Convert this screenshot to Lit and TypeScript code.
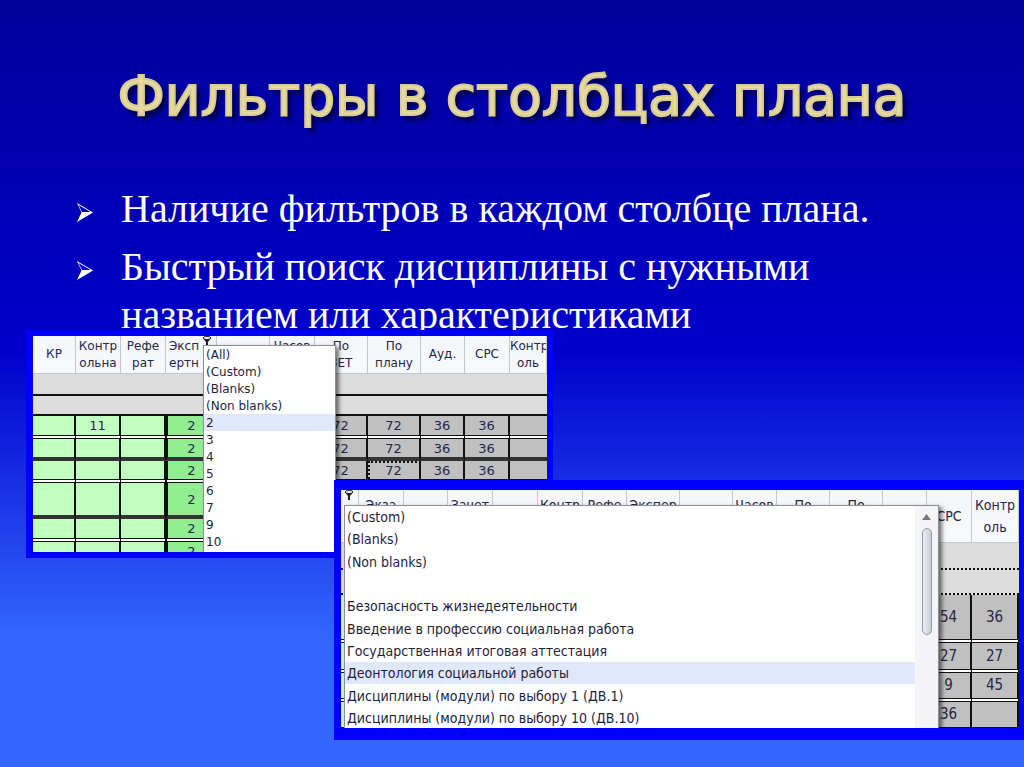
import { LitElement, html, css, nothing } from "lit";
import { customElement, property } from "lit/decorators.js";

type Column = { label: string; width?: number; filter?: boolean; top?: boolean };
type Row = { cells: string[]; height: number; dark?: boolean };

const funnel = html`<svg class="funnel" viewBox="0 0 10 10" aria-hidden="true">
  <ellipse cx="5" cy="2" rx="4" ry="1.5" fill="#fff" stroke="#222" />
  <path d="M1.5 3 L4 6 V10 H6 V6 L8.500 3 Z" fill="#222" />
</svg>`;

@customElement("plan-grid")
class PlanGrid extends LitElement {
  @property({ attribute: false }) columns: Column[] = [];
  @property({ attribute: false }) rows: Row[] = [];
  @property({ attribute: false }) greens: string[] = [];
  @property({ type: Number }) head = 38;
  @property({ type: Number }) band = 20;
  @property({ type: Boolean, reflect: true }) dotted = false;
  @property({ attribute: false }) focusCell = "";

  static styles = css`
    :host { display: block; }
    .grid {
      width: 100%;
      table-layout: fixed;
      border-collapse: separate;
      border-spacing: 0;
      color: #26264a;
      background: #fff;
      text-align: center;
    }
    .title {
      padding: 0;
      font-weight: 400;
      line-height: var(--head-line);
      white-space: pre;
      overflow: hidden;
      background: linear-gradient(#f4f6f9, #f8f9fb);
      border-right: 1px solid #c3c7ce;
      border-bottom: 1px solid #c3c7ce;
      box-sizing: border-box;
      position: relative;
    }
    .top { vertical-align: top; padding-top: var(--head-pad); }
    .filtered { padding-right: 14px; }
    .funnel { position: absolute; right: 4px; top: 0; width: 10px; height: 10px; }
    .band { padding: 0; background: #dcdcdc; border-bottom: 2px solid #111; box-sizing: border-box; }
    :host([dotted]) .band { border-bottom-style: dotted; }
    .cell {
      padding: 0;
      box-sizing: border-box;
      background: #c0c0c0;
      border-right: 2px solid #111;
      border-bottom: 4px double #111;
      background-clip: padding-box;
      line-height: 1;
      font-size: var(--cell-size);
    }
    :host(:not([dotted])) .cell:last-child { border-right: 0; }
    .dark .cell { border-bottom: 4px solid #333; }
    .light { background-color: #c0ffc0; }
    .strong { background-color: #90ee90; border-left: 2px solid #111; }
    .focus { outline: 2px dotted #111; outline-offset: -2px; }
  `;

  render() {
    const span = this.columns.length;
    return html`<table class="grid">
      <colgroup>
        ${this.columns.map((c) => html`<col style=${c.width ? `width:${c.width}px` : nothing} />`)}
      </colgroup>
      <thead>
        <tr style="height:${this.head}px">
          ${this.columns.map(
            (c) => html`<th scope="col" class="title ${c.filter ? "filtered" : ""} ${c.top ? "top" : ""}">${c.label}${c.filter ? funnel : nothing}</th>`
          )}
        </tr>
      </thead>
      <tbody>
        <tr style="height:${this.band + 2}px"><td class="band" colspan=${span}></td></tr>
        <tr style="height:${this.band}px"><td class="band" colspan=${span}></td></tr>
        ${this.rows.map(
          (r, y) => html`<tr class=${r.dark ? "dark" : ""} style="height:${r.height}px">
            ${r.cells.map(
              (v, x) => html`<td class="cell ${this.greens[x] ?? ""} ${this.focusCell === `${y}-${x}` ? "focus" : ""}">${v}</td>`
            )}
          </tr>`
        )}
      </tbody>
    </table>`;
  }
}

const planColumns: Column[] = [
  { label: "КР", width: 43 },
  { label: "Контр\nольна", width: 45 },
  { label: "Рефе\nрат", width: 45 },
  { label: "Эксп\nертн", width: 51, filter: true },
  { label: "", width: 53 },
  { label: "Часов", width: 45, top: true },
  { label: "По\nЗЕТ", width: 53 },
  { label: "По\nплану", width: 53 },
  { label: "Ауд.", width: 44 },
  { label: "СРС", width: 45 },
  { label: "Контр\nоль" },
];
const planValues = ["", "", "", "2", "", "", "72", "72", "36", "36", ""];
const planRows: Row[] = [
  { cells: planValues.map((v, i) => (i === 1 ? "11" : v)), height: 23 },
  { cells: planValues, height: 22, dark: true },
  { cells: planValues, height: 22 },
  { cells: planValues, height: 36, dark: true },
  { cells: planValues, height: 23 },
  { cells: planValues, height: 22 },
];

const nameColumns: Column[] = [
  { label: "", width: 18, filter: true },
  { label: "Экза", width: 45, top: true },
  { label: "", width: 44 },
  { label: "Зачет", width: 45, top: true },
  { label: "", width: 45 },
  { label: "Контр", width: 45, top: true },
  { label: "Рефе", width: 44, top: true },
  { label: "Экспер", width: 53, top: true },
  { label: "", width: 53 },
  { label: "Часов", width: 44, top: true },
  { label: "По", width: 53, top: true },
  { label: "По", width: 53, top: true },
  { label: "", width: 44 },
  { label: "СРС", width: 45 },
  { label: "Контр\nоль" },
];
const nameRow = (a: string, b: string) => [...Array(13).fill(""), a, b];
const nameRows: Row[] = [
  { cells: nameRow("54", "36"), height: 48 },
  { cells: nameRow("27", "27"), height: 30 },
  { cells: nameRow("9", "45"), height: 29 },
  { cells: nameRow("36", ""), height: 29 },
];

const numbers = ["(All)", "(Custom)", "(Blanks)", "(Non blanks)", "2", "3", "4", "5", "6", "7", "9", "10"];
const names = [
  "(Custom)",
  "(Blanks)",
  "(Non blanks)",
  "\u00a0",
  "Безопасность жизнедеятельности",
  "Введение в профессию социальная работа",
  "Государственная итоговая аттестация",
  "Деонтология социальной работы",
  "Дисциплины (модули) по выбору 1 (ДВ.1)",
  "Дисциплины (модули) по выбору 10 (ДВ.10)",
];

@customElement("app-root")
class AppRoot extends LitElement {
  static styles = css`
    :host { display: block; }
    .slide {
      position: relative;
      min-height: 100vh;
      box-sizing: border-box;
      overflow: hidden;
      padding: 60px 76px 0;
      background: linear-gradient(#000099, #0000cc 46%, #3366ff 83%);
    }
    .heading {
      display: flex;
      justify-content: center;
      margin: 0;
      font: 400 55px/72px "DejaVu Sans", Verdana, sans-serif;
      white-space: nowrap;
      color: #e6da9e;
      -webkit-text-stroke: 2px #d8cb94;
      text-shadow: 4px 5px 4px #00003c;
    }
    .points {
      display: flex;
      flex-direction: column;
      gap: 10px;
      margin: 53px 0 0;
      padding: 0;
      list-style: none;
      color: #fff;
      font: 40px/48px "Liberation Serif", "Times New Roman", serif;
    }
    .point { display: flex; gap: 28px; }
    .arrow { flex: none; width: 17px; height: 19px; margin-top: 18px; }
    .shot { position: absolute; border: 7px solid #0000ff; box-sizing: border-box; overflow: hidden; }
    .first {
      left: 26px;
      right: 471px;
      top: 330px;
      height: 228px;
      border-width: 6px 6px 6px 7px;
      --head-line: 17px;
      --head-pad: 2px;
      --cell-size: 13px;
      font: 12px "DejaVu Sans", Verdana, sans-serif;
    }
    .second {
      left: 334px;
      right: 0;
      top: 480px;
      height: 260px;
      border-width: 10px 5px 12px 7px;
      --head-line: 22px;
      --head-pad: 4px;
      --cell-size: 15px;
      font: 14px "DejaVu Sans Condensed", Tahoma, sans-serif;
    }
    .menu { position: absolute; box-sizing: border-box; display: flex; background: #fff; border: 1px solid #8b8f96; border-bottom: 0; box-shadow: 3px 2px 4px #0008; }
    .numbers { left: 170px; top: 9px; bottom: 0; width: 133px; }
    .names { left: 3px; top: 15px; bottom: 0; right: 80px; }
    .list {
      flex: 1;
      min-width: 0;
      height: 100%;
      margin: 0;
      padding: 0;
      border: 0;
      outline: 0;
      appearance: none;
      overflow: hidden;
      background: #fff;
      color: #1e1e3c;
      font: inherit;
    }
    .option { display: flex; align-items: center; box-sizing: border-box; padding: 0 2px; color: #1e1e3c; }
    .option:checked { background: linear-gradient(#e0e8fb, #e0e8fb); color: #1e1e3c; }
    .numbers .option { height: 17px; min-height: 17px; }
    .names .option { height: 22px; min-height: 22px; }
    .names .option:nth-child(3n) { height: 23px; }
    .scroll { display: flex; flex-direction: column; align-items: center; gap: 8px; width: 23px; padding-top: 8px; box-sizing: border-box; background: #f4f4f7; }
    .up { width: 9px; height: 6px; }
    .thumb { width: 10px; height: 107px; box-sizing: border-box; border: 1px solid #9598a2; border-radius: 5px; background: linear-gradient(90deg, #eceef2, #c9ccd4); }
  `;

  private point(text: string) {
    return html`<li class="point">
      <svg class="arrow" viewBox="0 0 17 19" aria-hidden="true">
        <path d="M1 0 L17 9.500 L1 19 L5.500 9.500 Z" fill="#fff" />
        <path d="M2.500 2 L14.500 9 H6 Z" fill="#0000bc" />
      </svg>
      <span>${text}</span>
    </li>`;
  }

  private list(label: string, items: string[], current: string) {
    return html`<select class="list" size=${items.length} aria-label=${label}>
      ${items.map((t) => html`<option class="option" ?selected=${t === current}>${t}</option>`)}
    </select>`;
  }

  render() {
    return html`<main class="slide">
      <h1 class="heading">Фильтры в столбцах плана</h1>
      <ul class="points">
        ${this.point("Наличие фильтров в каждом столбце плана.")}
        ${this.point("Быстрый поиск дисциплины с нужными названием или характеристиками")}
      </ul>
      <section class="shot first">
        <plan-grid .columns=${planColumns} .rows=${planRows} .greens=${["light", "light", "light", "strong"]} .focusCell=${"2-7"}></plan-grid>
        <div class="menu numbers">${this.list("Экспертное", numbers, "2")}</div>
      </section>
      <section class="shot second">
        <plan-grid dotted .columns=${nameColumns} .rows=${nameRows} .greens=${["light"]} .head=${53} .band=${25}></plan-grid>
        <div class="menu names">
          ${this.list("Дисциплина", names, "Деонтология социальной работы")}
          <div class="scroll">
            <svg class="up" viewBox="0 0 9 6" aria-hidden="true"><path d="M0 6 L4.500 0 L9 6 Z" fill="#777" /></svg>
            <div class="thumb"></div>
          </div>
        </div>
      </section>
    </main>`;
  }
}
